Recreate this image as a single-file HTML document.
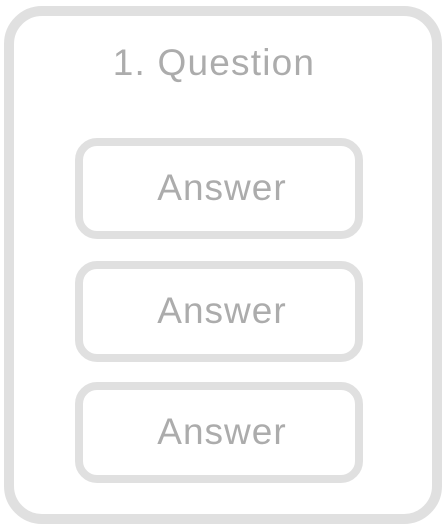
<!DOCTYPE html>
<html><head><style>
html,body{margin:0;padding:0;background:#fff;width:446px;height:530px;overflow:hidden}
body{position:relative;font-family:"Liberation Sans",sans-serif;color:#acacac}
.outer{position:absolute;left:4px;top:6px;width:418px;height:498px;border:10px solid #e0e0e0;border-radius:38px}
.q{position:absolute;left:0;width:428px;top:41px;text-align:center;font-size:37px;line-height:44px;letter-spacing:1.2px}
.a{position:absolute;left:75px;width:272px;height:85px;border:8px solid #e0e0e0;border-radius:22px;font-size:37px;line-height:83px;text-align:center;letter-spacing:1px;text-indent:6px}
</style></head><body>
<div class="outer"></div>
<div class="q">1. Question</div>
<div class="a" style="top:138px">Answer</div>
<div class="a" style="top:261px">Answer</div>
<div class="a" style="top:382px">Answer</div>
</body></html>
